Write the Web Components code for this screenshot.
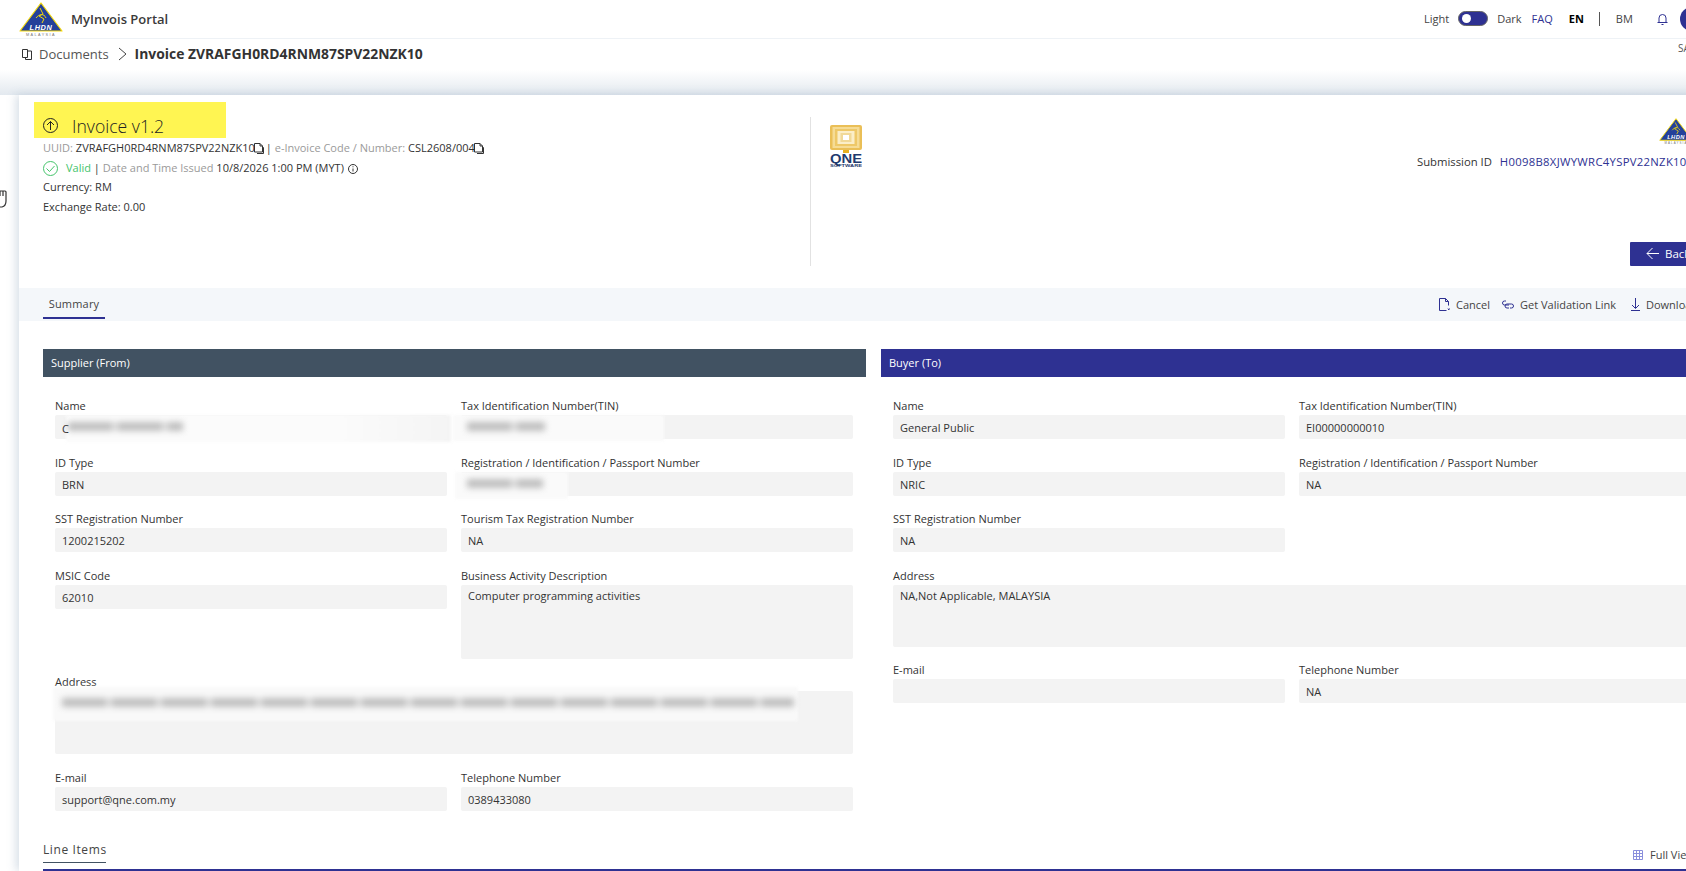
<!DOCTYPE html>
<html lang="en">
<head>
<meta charset="utf-8">
<title>MyInvois Portal</title>
<style>
html, body { margin: 0; padding: 0; background: #fff; height: 871px; overflow: hidden; }
body { width: 1686px; font-family: "Open Sans", "Noto Sans", sans-serif; font-size: 11px; color: #333; position: relative; }
</style>
</head>
<body>
<app-header></app-header>
<bread-crumb current="Invoice ZVRAFGH0RD4RNM87SPV22NZK10">Documents</bread-crumb>
<div style="height:25px;background:linear-gradient(#fff,#e3e9ef)"></div>
<doc-card>
  <doc-summary></doc-summary>
  <tab-bar></tab-bar>
  <div style="display:flex;gap:15px;padding:28px 0 0 24px">
    <party-panel title="Supplier (From)" color="#415262">
      <info-field label="Name" redact="name"></info-field>
      <info-field label="Tax Identification Number(TIN)" redact="tin"></info-field>
      <info-field label="ID Type">BRN</info-field>
      <info-field label="Registration / Identification / Passport Number" redact="reg"></info-field>
      <info-field label="SST Registration Number">1200215202</info-field>
      <info-field label="Tourism Tax Registration Number">NA</info-field>
      <info-field label="MSIC Code">62010</info-field>
      <info-field label="Business Activity Description" height="74">Computer programming activities</info-field>
      <info-field label="Address" wide height="63" redact="address"></info-field>
      <info-field label="E-mail">support@qne.com.my</info-field>
      <info-field label="Telephone Number">0389433080</info-field>
    </party-panel>
    <party-panel title="Buyer (To)" color="#2e3192">
      <info-field label="Name">General Public</info-field>
      <info-field label="Tax Identification Number(TIN)">EI00000000010</info-field>
      <info-field label="ID Type">NRIC</info-field>
      <info-field label="Registration / Identification / Passport Number">NA</info-field>
      <info-field label="SST Registration Number" solo>NA</info-field>
      <info-field label="Address" wide height="62">NA,Not Applicable, MALAYSIA</info-field>
      <info-field label="E-mail"></info-field>
      <info-field label="Telephone Number">NA</info-field>
    </party-panel>
  </div>
  <line-items></line-items>
</doc-card>
<svg style="position:absolute;left:-3px;top:189px" width="11" height="20" viewBox="0 0 11 20" fill="none" stroke="#333" stroke-width="1.2"><path d="M3 2h5q1 0 1 1v9q0 5-4 6H3"/><path d="M6 2v5M3 2v5"/></svg>

<script>
// small helper, every element just stamps its html in an open shadow root
function shadow(el, html) {
    el.attachShadow({ mode: 'open' }).innerHTML = html;
}

const LOGO = (w, h) => `
<svg width="${w}" height="${h}" viewBox="0 0 44 34" style="display:block;flex:none">
  <path d="M22 1 L43 29 H1 Z" fill="#24409a" stroke="#f5d90a" stroke-width="1.2" stroke-linejoin="round"/>
  <path d="M21 6l3 6-4 2 5 3-2 4M17 16c3-4 8-5 10 0" fill="none" stroke="#f5d90a" stroke-width="1"/>
  <text x="22" y="28" text-anchor="middle" font-family="Liberation Sans" font-size="7.4" font-weight="700" font-style="italic" fill="#fff" letter-spacing=".6">LHDN</text>
  <text x="22" y="34" text-anchor="middle" font-family="Liberation Sans" font-size="3.8" fill="#777" letter-spacing="1.4">MALAYSIA</text>
</svg>`;

class AppHeader extends HTMLElement {
    constructor() {
        super();
        shadow(this, `
<style>
:host { display: flex; align-items: center; box-sizing: border-box; height: 39px; padding: 0 0 1px 19px; border-bottom: 1px solid #eef2f6; position: relative; }
.title { margin-left: 8px; font-size: 13px; font-weight: 600; color: #3a3a3a; }
.right { margin-left: auto; display: flex; align-items: center; font-size: 11px; color: #444; width: 262px; flex: none; position: relative; height: 38px; }
.right > * { flex: none; }
.switch { width: 30px; height: 15px; border-radius: 8px; background: #2e3192; border: 1px solid #666; box-sizing: border-box; margin: 0 9px 0 9px; position: relative; }
.switch i { position: absolute; left: 3px; top: 2px; width: 9px; height: 9px; border-radius: 50%; background: #fff; }
.faq { color: #2e3192; margin-left: 10px; }
.en { font-weight: 700; color: #000; margin-left: 16px; }
.sep { width: 1px; height: 14px; background: #555; margin: 0 16px 0 15px; }
.bell { margin-left: 24px; display: block; }
.avatar { width: 24px; height: 24px; border-radius: 50%; background: #2e3192; margin-left: 12px; }
.sa { position: absolute; left: 254px; top: 41px; font-size: 10px; color: #555; }
</style>
${LOGO(44, 34)}
<span class="title">MyInvois Portal</span>
<div class="right">
  <span>Light</span><span class="switch"><i></i></span><span>Dark</span>
  <span class="faq">FAQ</span><span class="en">EN</span><span class="sep"></span><span>BM</span>
  <svg class="bell" width="11" height="12" viewBox="0 0 11 12" fill="none" stroke="#2e3192"><path d="M.5 9.500h10M2 9.500V5a3.500 3.500 0 0 1 7 0v4.500M4.500 11.500h2"/></svg>
  <span class="avatar"></span>
  <span class="sa">SA</span>
</div>`);
    }
}

class BreadCrumb extends HTMLElement {
    constructor() {
        super();
        shadow(this, `
<style>
:host { display: flex; align-items: center; height: 31px; padding: 0 0 2px 21px; box-sizing: border-box; font-size: 13px; color: #555; }
svg { flex: none; }
.doc { margin-left: 6px; }
.chev { margin: 0 8px 0 9px; }
b { color: #333; font-weight: 700; font-size: 13.9px; }
</style>
<svg width="12" height="12" viewBox="0 0 12 12" fill="none" stroke="#333"><path d="M1.500 1.500h5v8h-5zM6.500 3h4v8.500h-6v-2"/></svg>
<span class="doc"><slot></slot></span>
<svg class="chev" width="9" height="14" viewBox="0 0 9 14" fill="none" stroke="#444"><path d="M1 1l7 6-7 6"/></svg>
<b>${this.getAttribute('current')}</b>`);
    }
}

class DocCard extends HTMLElement {
    constructor() {
        super();
        shadow(this, `
<style>
:host { display: block; margin-left: 19px; width: 1730px; height: 776px; background: #fff; box-shadow: -3px 0 9px rgba(110,140,170,.28); }
</style>
<slot></slot>`);
    }
}

const COPY = `<svg class="copy" width="10" height="12" viewBox="0 0 10 12" fill="none" stroke="#333"><path d="M.5 1.500h5.500l2.500 2.500v6h-8zM6 1.500v2.500h2.500M8.500 5l1 .5v6H3"/></svg>`;

class DocSummary extends HTMLElement {
    constructor() {
        super();
        shadow(this, `
<style>
:host { display: flex; height: 193px; box-sizing: border-box; color: #333; font-size: 11px; }
.left { width: 791px; box-sizing: border-box; padding: 7px 0 0 15px; flex: none; }
.title { display: flex; align-items: flex-end; width: 192px; height: 36px; box-sizing: border-box; background: #fff552; padding: 0 0 2px 9px; font-size: 17.6px; font-weight: 300; color: #222; }
.title span { margin-left: 14px; line-height: 20px; }
.title svg { margin-bottom: 3px; }
.rows { padding: 0 0 0 9px; }
.row { height: 19.7px; line-height: 19.7px; white-space: pre; }
.row svg { vertical-align: -2px; }
.row svg.big { vertical-align: -4px; }
.muted { color: #9a9a9a; }
.copy { margin-left: -1px; margin-right: 2px; }
.valid { color: #45c46b; margin-left: 8px; }
.info { margin-left: 4px; }
.right { flex: 1; border-left: 1px solid #e2e2e2; margin-top: 22px; height: 149px; position: relative; }
.qne { position: absolute; left: 19px; top: 8px; display: block; }
.logo { position: absolute; left: 848px; top: 0; }
.sub { position: absolute; left: 606px; top: 37px; white-space: pre; font-size: 11.3px; }
.sub span { color: #2e3192; letter-spacing: .3px; margin-left: 2px; }
.back { position: absolute; left: 819px; top: 125px; width: 90px; height: 24px; background: #2e3192; color: #fff; display: flex; align-items: center; padding: 0 0 2px 16px; box-sizing: border-box; border-radius: 1px; font-size: 11.5px; gap: 6px; }
</style>
<div class="left">
  <div class="title">
    <svg width="15" height="15" viewBox="0 0 15 15" fill="none" stroke="#222"><circle cx="7.500" cy="7.500" r="7"/><path d="M7.500 12V3.500M4 7l3.500-3.500L11 7"/></svg>
    <span>Invoice v1.2</span>
  </div>
  <div class="rows">
    <div class="row"><span class="muted">UUID: </span>ZVRAFGH0RD4RNM87SPV22NZK10${COPY}| <span class="muted">e-Invoice Code / Number: </span>CSL2608/004${COPY}</div>
    <div class="row"><svg class="big" width="15" height="15" viewBox="0 0 15 15" fill="none" stroke="#45c46b"><circle cx="7.500" cy="7.500" r="7"/><path d="M3.500 7.500l3 3 5-5.500"/></svg><span class="valid">Valid</span> | <span class="muted">Date and Time Issued </span>10/8/2026 1:00 PM (MYT)<svg class="info" width="10" height="10" viewBox="0 0 10 10" fill="none" stroke="#333"><circle cx="5" cy="5" r="4.500"/><path d="M5 4.500v3M5 2.300v1"/></svg></div>
    <div class="row">Currency: RM</div>
    <div class="row">Exchange Rate: 0.00</div>
  </div>
</div>
<div class="right">
  <svg class="qne" width="32" height="42" viewBox="0 0 32 42">
    <rect x="0" y="0" width="32" height="25" rx="2" fill="#eabf57"/>
    <rect x="2.500" y="2" width="27" height="21" fill="#f6dc95"/>
    <rect x="5" y="4" width="22" height="17" fill="#eec868"/>
    <rect x="7.500" y="6" width="17" height="13" fill="#fbeec8"/>
    <rect x="10.500" y="8" width="11" height="9" fill="#f1d998"/>
    <rect x="13" y="10" width="6" height="5" fill="#fff"/>
    <rect x="13" y="25" width="6" height="3" fill="#e8b022"/>
    <text x="0" y="38" textLength="32" lengthAdjust="spacingAndGlyphs" font-family="Liberation Sans" font-weight="700" font-size="12" fill="#1f3a6e">QNE</text>
    <text x="0" y="42" textLength="32" lengthAdjust="spacingAndGlyphs" font-family="Liberation Sans" font-weight="700" font-size="3.500" fill="#1f3a6e">SOFTWARE</text>
  </svg>
  <div class="logo">${LOGO(34, 28)}</div>
  <div class="sub">Submission ID  <span>H0098B8XJWYWRC4YSPV22NZK10</span></div>
  <div class="back">
    <svg width="13" height="13" viewBox="0 0 13 13" fill="none" stroke="#fff"><path d="M13 6.500H1M6.500 1L1 6.500l5.500 5.500"/></svg>
    <span>Back</span>
  </div>
</div>`);
    }
}

class TabBar extends HTMLElement {
    constructor() {
        super();
        shadow(this, `
<style>
:host { display: flex; align-items: stretch; height: 33px; background: #f4f7fa; font-size: 11px; color: #444; position: relative; }
.tab { margin-left: 24px; width: 62px; height: 31px; box-sizing: border-box; border-bottom: 2px solid #2e3192; text-align: center; line-height: 31px; letter-spacing: .2px; }
.acts { margin-left: auto; display: flex; align-items: center; gap: 6px; width: 310px; flex: none; white-space: nowrap; padding-bottom: 1px; box-sizing: border-box; }
.acts svg { flex: none; }
</style>
<div class="tab">Summary</div>
<div class="acts">
  <svg width="11" height="13" viewBox="0 0 11 13" fill="none" stroke="#2e3192"><path d="M.5.500h6l3 3v4M.5.500v12h7M6.500.500v3h3M9 10.500l1.500 1.500M10.500 10.500L9 12"/></svg><span style="margin-right:6px">Cancel</span>
  <svg width="12" height="9" viewBox="0 0 12 9" fill="none" stroke="#2e3192"><path d="M4 1H2.500a2 2 0 0 0 0 4H7M8 8h1.500a2 2 0 0 0 0-4H5a2 2 0 0 0 0 4h2"/></svg><span style="margin-right:9px">Get Validation Link</span>
  <svg width="9" height="13" viewBox="0 0 9 13" fill="none" stroke="#2e3192"><path d="M4.500 0v10M1 7l3.500 3.500L8 7M0 12.500h9"/></svg><span>Download</span>
</div>`);
    }
}

class PartyPanel extends HTMLElement {
    constructor() {
        super();
        shadow(this, `
<style>
:host { display: block; width: 823px; flex: none; }
.head { height: 28px; line-height: 28px; padding-left: 8px; background: ${this.getAttribute('color')}; color: #fff; font-size: 11px; }
.grid { display: grid; grid-template-columns: 392px 392px; column-gap: 14px; row-gap: 16.6px; padding: 22px 0 0 12px; }
</style>
<div class="head">${this.getAttribute('title')}</div>
<div class="grid"><slot></slot></div>`);
    }
}

const REDACT = {
    name: `<i class="patch" style="left:11px;width:385px;height:27px;background:linear-gradient(90deg,#fbfbfb 70%,#f4f4f4)"></i><i class="smear" style="left:13px;width:115px"></i><span style="position:absolute;left:7px;top:1px">C</span>`,
    tin: `<i class="patch" style="left:-8px;width:211px;height:26px;background:#fafafa"></i><i class="smear" style="left:6px;width:78px"></i>`,
    reg: `<i class="patch" style="left:-6px;width:113px;height:27px;background:#fafafa"></i><i class="smear" style="left:6px;width:76px"></i>`,
    address: `<i class="patch" style="left:-2px;width:745px;height:34px;top:-4px;background:#f9f9f9"></i><i class="smear" style="left:7px;width:732px;top:7px"></i>`
};

class InfoField extends HTMLElement {
    constructor() {
        super();
        const h = Number(this.getAttribute('height')) || 24;
        const tall = this.hasAttribute('height');
        shadow(this, `
<style>
:host { display: block; min-width: 0; }
:host([wide]) { grid-column: 1 / -1; }
:host([solo]) { grid-column: 1; }
.label { height: 16px; line-height: 14px; font-size: 11px; color: #333; white-space: nowrap; }
.value { position: relative; box-sizing: border-box; height: ${h}px; background: #f3f3f3; border-radius: 2px; padding: ${tall ? '3px' : '0'} 0 0 7px; line-height: ${tall ? '16px' : (h + 2) + 'px'}; font-size: 11px; color: #333; white-space: nowrap; }
.patch { position: absolute; top: 0; filter: blur(1.5px); }
.smear { position: absolute; top: 7px; height: 9px; background: repeating-linear-gradient(90deg,#b0b0b0 0 44px,#d8d8d8 44px 50px); filter: blur(3px); opacity: .8; }
</style>
<div class="label">${this.getAttribute('label')}</div>
<div class="value">${REDACT[this.getAttribute('redact')] || ''}<slot></slot></div>`);
    }
}

class LineItems extends HTMLElement {
    constructor() {
        super();
        shadow(this, `
<style>
:host { display: flex; align-items: flex-start; margin: 31px 0 0 24px; height: 27px; border-bottom: 2px solid #2e3192; position: relative; font-size: 12px; color: #444; }
.tab { width: 63px; height: 20px; line-height: 16px; border-bottom: 1px solid #415262; letter-spacing: .6px; white-space: nowrap; }
.full { margin-left: auto; width: 116px; flex: none; display: flex; align-items: center; gap: 7px; font-size: 11px; height: 22px; margin-top: 2px; white-space: nowrap; }
</style>
<div class="tab">Line Items</div>
<div class="full">
  <svg width="10" height="10" viewBox="0 0 10 10" fill="none" stroke="#8a8fdc"><path d="M.5.500h9v9h-9zM3.500.500v9M6.500.500v9M.5 3.500h9M.5 6.500h9"/></svg>
  <span>Full View</span>
</div>`);
    }
}

customElements.define('app-header', AppHeader);
customElements.define('bread-crumb', BreadCrumb);
customElements.define('doc-card', DocCard);
customElements.define('doc-summary', DocSummary);
customElements.define('tab-bar', TabBar);
customElements.define('party-panel', PartyPanel);
customElements.define('info-field', InfoField);
customElements.define('line-items', LineItems);
</script>
</body>
</html>
